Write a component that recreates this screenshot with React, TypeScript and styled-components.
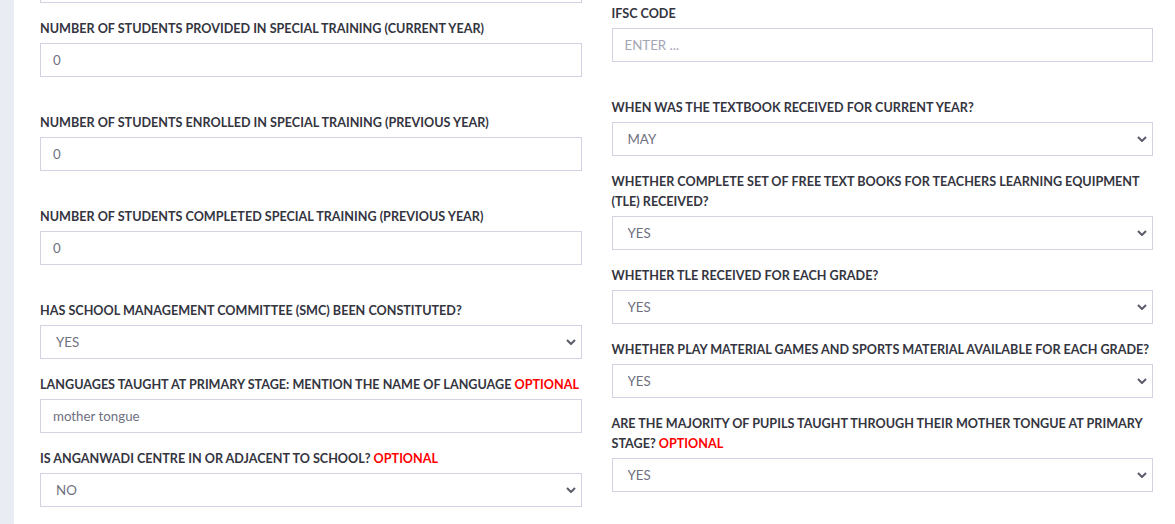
import React from "react";
import styled, { createGlobalStyle } from "styled-components";

const Global = createGlobalStyle`
  html, body { margin: 0; padding: 0; background: #fff; overflow: hidden; }
  body { font-family: "Lato", "Noto Sans", sans-serif; }
  * { box-sizing: border-box; }
`;

const Page = styled.div`
  display: flex;
  height: 524px;
  overflow: hidden;
`;

const SideStrip = styled.div`
  width: 14px;
  flex: none;
  background: #eaecf4;
`;

const Main = styled.main`
  flex: 1;
  padding: 3px 22px 0 26px;
`;

const Columns = styled.div`
  display: grid;
  grid-template-columns: 1fr 1fr;
  column-gap: 30px;
  align-items: start;
`;

const Column = styled.div`
  display: flex;
  flex-direction: column;
`;

const Group = styled.div<{ $extra?: boolean }>`
  display: flex;
  flex-direction: column;
  margin-bottom: ${(p) => (p.$extra ? "35px" : "15px")};
`;

const Label = styled.label`
  display: block;
  padding-top: 1px;
  margin-bottom: 4px;
  font-size: 12.6px;
  line-height: 20px;
  font-weight: 700;
  color: #34353f;
  text-transform: uppercase;
`;

const Optional = styled.span`
  color: #ff0000;
`;

const controlBase = `
  width: 100%;
  height: 34px;
  border: 1px solid #d1d3e2;
  border-radius: 0;
  background: #fff;
  font-family: inherit;
  font-size: 13.3px;
  color: #6e707e;
  outline: none;
`;

const Input = styled.input<{ $clipped?: boolean }>`
  ${controlBase}
  padding: 0 12px;
  margin-top: ${(p) => (p.$clipped ? "-34px" : "0")};
  &::placeholder {
    color: #a3a6b4;
  }
`;

const SelectWrap = styled.div`
  position: relative;
`;

const Select = styled.select`
  ${controlBase}
  appearance: none;
  -webkit-appearance: none;
  padding: 0 30px 0 15px;
`;

const Chevron = styled.svg`
  position: absolute;
  right: 6px;
  top: 14px;
  width: 10px;
  height: 6px;
  pointer-events: none;
`;

type FieldProps = {
  label: string;
  optional?: boolean;
  extra?: boolean;
  value?: string;
  placeholder?: string;
  options?: string[];
};

const Field = ({ label, optional, extra, value, placeholder, options }: FieldProps) => (
  <Group $extra={extra}>
    <Label>
      {label}
      {optional && (
        <>
          {" "}
          <Optional>OPTIONAL</Optional>
        </>
      )}
    </Label>
    {options ? (
      <SelectWrap>
        <Select defaultValue={value}>
          {options.map((o) => (
            <option key={o} value={o}>
              {o}
            </option>
          ))}
        </Select>
        <Chevron viewBox="0 0 10 6">
          <polyline points="1,1 5,5 9,1" fill="none" stroke="#5a5c69" strokeWidth="2" />
        </Chevron>
      </SelectWrap>
    ) : (
      <Input defaultValue={value} placeholder={placeholder} />
    )}
  </Group>
);

const yesNo = ["YES", "NO"];
const months = ["JANUARY", "FEBRUARY", "MARCH", "APRIL", "MAY", "JUNE"];

export default function App() {
  return (
    <>
      <Global />
      <Page>
        <SideStrip />
        <Main>
          <Columns>
            <Column>
              <Group>
                <Input $clipped defaultValue="" />
              </Group>
              <Field extra label="Number of students provided in special training (current year)" value="0" />
              <Field extra label="Number of students enrolled in special training (previous year)" value="0" />
              <Field extra label="Number of students completed special training (previous year)" value="0" />
              <Field label="Has School Management Committee (SMC) been constituted?" value="YES" options={yesNo} />
              <Field optional label="Languages taught at primary stage: mention the name of language" value="mother tongue" />
              <Field optional label="Is Anganwadi centre in or adjacent to school?" value="NO" options={yesNo} />
            </Column>
            <Column>
              <Field extra label="IFSC Code" placeholder="ENTER ..." />
              <Field label="When was the textbook received for current year?" value="MAY" options={months} />
              <Field
                label="Whether complete set of free text books for Teachers Learning Equipment (TLE) received?"
                value="YES"
                options={yesNo}
              />
              <Field label="Whether TLE received for each grade?" value="YES" options={yesNo} />
              <Field
                label="Whether play material games and sports material available for each grade?"
                value="YES"
                options={yesNo}
              />
              <Field
                optional
                label="Are the majority of pupils taught through their mother tongue at primary stage?"
                value="YES"
                options={yesNo}
              />
            </Column>
          </Columns>
        </Main>
      </Page>
    </>
  );
}
